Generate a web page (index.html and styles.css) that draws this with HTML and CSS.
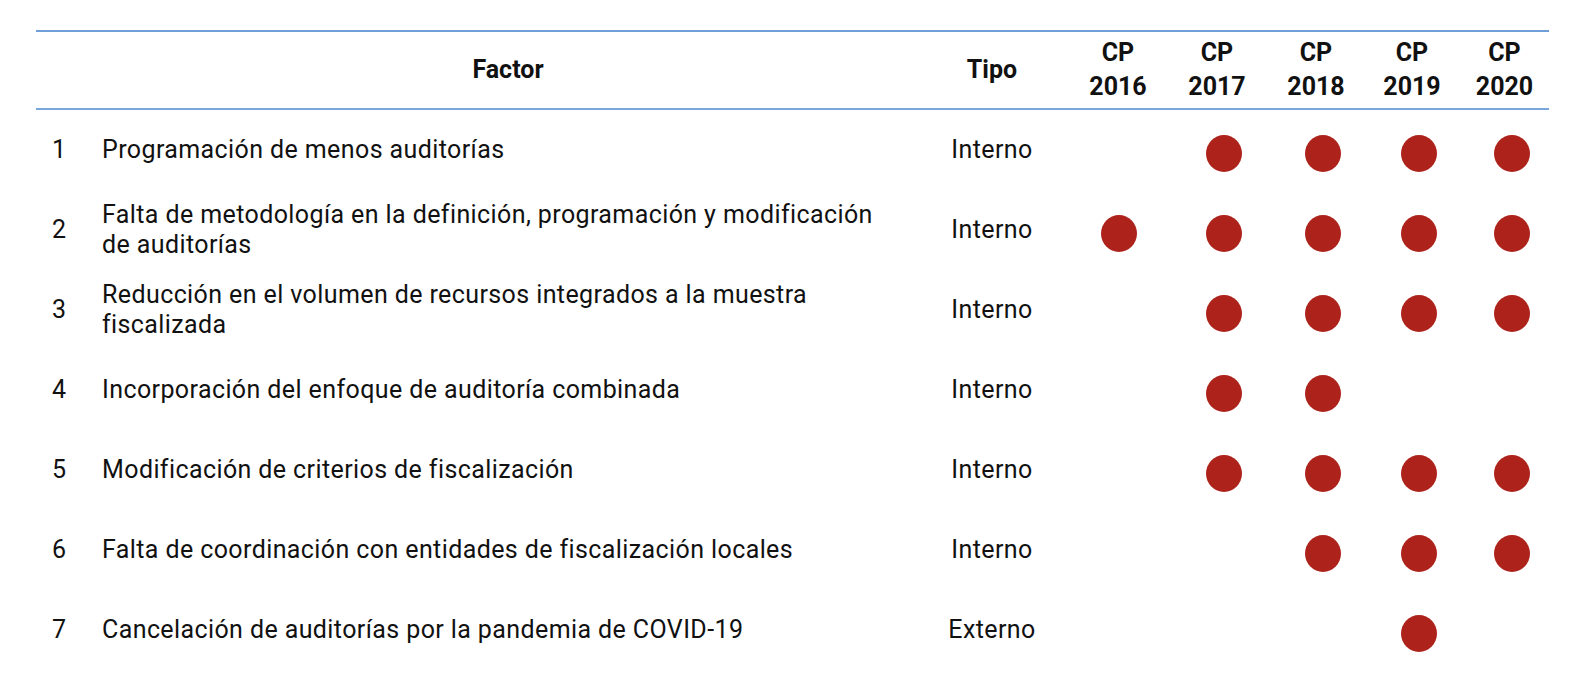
FILE: index.html
```html
<!DOCTYPE html>
<html lang="es">
<head>
<meta charset="utf-8">
<title>Factores</title>
<link rel="stylesheet" href="styles.css">
</head>
<body>
<div class="table">
  <div class="row head">
    <div class="cell"></div>
    <div class="cell center">Factor</div>
    <div class="cell center">Tipo</div>
    <div class="cell center">CP<br>2016</div>
    <div class="cell center">CP<br>2017</div>
    <div class="cell center">CP<br>2018</div>
    <div class="cell center">CP<br>2019</div>
    <div class="cell center">CP<br>2020</div>
  </div>

  <div class="row">
    <div class="cell num">1</div>
    <div class="cell factor">Programación de menos auditorías</div>
    <div class="cell center">Interno</div>
    <div class="cell dotcell first"></div>
    <div class="cell dotcell"><span class="dot"></span></div>
    <div class="cell dotcell"><span class="dot"></span></div>
    <div class="cell dotcell"><span class="dot"></span></div>
    <div class="cell dotcell"><span class="dot"></span></div>
  </div>

  <div class="row">
    <div class="cell num">2</div>
    <div class="cell factor">Falta de metodología en la definición, programación y modificación de auditorías</div>
    <div class="cell center">Interno</div>
    <div class="cell dotcell first"><span class="dot"></span></div>
    <div class="cell dotcell"><span class="dot"></span></div>
    <div class="cell dotcell"><span class="dot"></span></div>
    <div class="cell dotcell"><span class="dot"></span></div>
    <div class="cell dotcell"><span class="dot"></span></div>
  </div>

  <div class="row">
    <div class="cell num">3</div>
    <div class="cell factor">Reducción en el volumen de recursos integrados a la muestra fiscalizada</div>
    <div class="cell center">Interno</div>
    <div class="cell dotcell first"></div>
    <div class="cell dotcell"><span class="dot"></span></div>
    <div class="cell dotcell"><span class="dot"></span></div>
    <div class="cell dotcell"><span class="dot"></span></div>
    <div class="cell dotcell"><span class="dot"></span></div>
  </div>

  <div class="row">
    <div class="cell num">4</div>
    <div class="cell factor">Incorporación del enfoque de auditoría combinada</div>
    <div class="cell center">Interno</div>
    <div class="cell dotcell first"></div>
    <div class="cell dotcell"><span class="dot"></span></div>
    <div class="cell dotcell"><span class="dot"></span></div>
    <div class="cell dotcell"></div>
    <div class="cell dotcell"></div>
  </div>

  <div class="row">
    <div class="cell num">5</div>
    <div class="cell factor">Modificación de criterios de fiscalización</div>
    <div class="cell center">Interno</div>
    <div class="cell dotcell first"></div>
    <div class="cell dotcell"><span class="dot"></span></div>
    <div class="cell dotcell"><span class="dot"></span></div>
    <div class="cell dotcell"><span class="dot"></span></div>
    <div class="cell dotcell"><span class="dot"></span></div>
  </div>

  <div class="row">
    <div class="cell num">6</div>
    <div class="cell factor">Falta de coordinación con entidades de fiscalización locales</div>
    <div class="cell center">Interno</div>
    <div class="cell dotcell first"></div>
    <div class="cell dotcell"></div>
    <div class="cell dotcell"><span class="dot"></span></div>
    <div class="cell dotcell"><span class="dot"></span></div>
    <div class="cell dotcell"><span class="dot"></span></div>
  </div>

  <div class="row">
    <div class="cell num">7</div>
    <div class="cell factor">Cancelación de auditorías por la pandemia de COVID-19</div>
    <div class="cell center">Externo</div>
    <div class="cell dotcell first"></div>
    <div class="cell dotcell"></div>
    <div class="cell dotcell"></div>
    <div class="cell dotcell"><span class="dot"></span></div>
    <div class="cell dotcell"></div>
  </div>
</div>
</body>
</html>
```

FILE: styles.css
```css
html, body {
  margin: 0;
  padding: 0;
  background: #ffffff;
}

body {
  font-family: Roboto, "Liberation Sans", sans-serif;
  color: #111111;
}

.table {
  margin: 30px 0 0 36px;
  width: 1513px;
  border-top: 2px solid #6f9fd9;
}

.row {
  display: grid;
  grid-template-columns: 66px 812px 156px 96px 102px 96px 96px 89px;
  height: 80px;
  font-size: 25px;
  line-height: 30px;
  letter-spacing: 0.4px;
}

.row.head {
  height: 76px;
  border-bottom: 2px solid #79a6dd;
  font-weight: 700;
  font-size: 25px;
  line-height: 34px;
  letter-spacing: 0;
}

.cell {
  display: flex;
  align-items: center;
}

.center {
  justify-content: center;
  text-align: center;
}

.num {
  padding-left: 16px;
}

.factor {
  padding-right: 28px;
}

.dotcell {
  justify-content: center;
  padding-left: 14px;
  padding-top: 7px;
}

.dotcell.first {
  padding-left: 2px;
}

.dot {
  display: block;
  width: 36px;
  height: 37px;
  border-radius: 50%;
  background: #ad231c;
}
```
